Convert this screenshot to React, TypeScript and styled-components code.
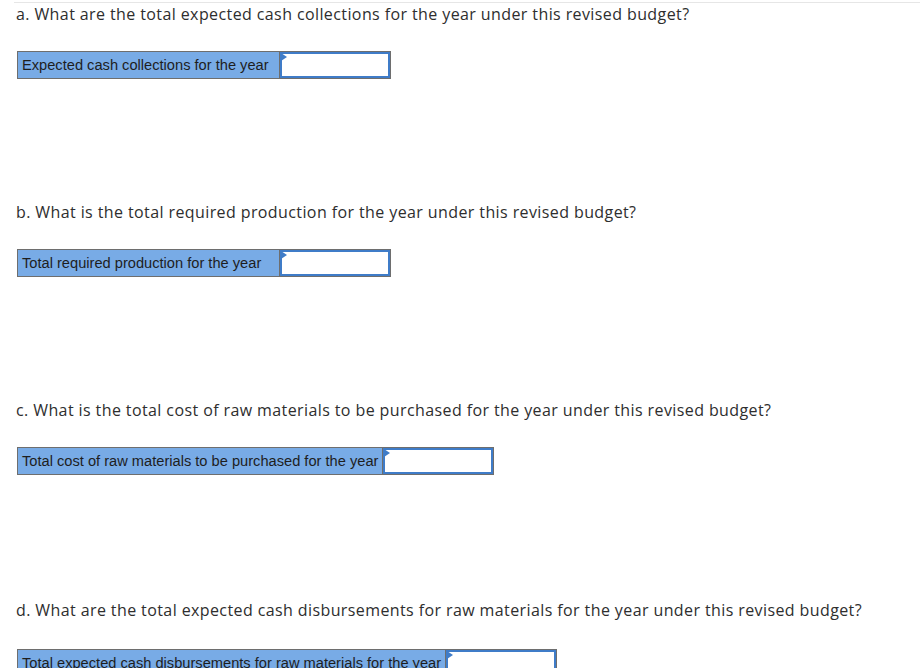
import React from "react";
import styled, { createGlobalStyle } from "styled-components";

const Global = createGlobalStyle`
  html, body { margin: 0; padding: 0; background: #ffffff; }
  body { font-family: "Open Sans", Lato, sans-serif; }
`;

const Page = styled.div`
  margin: 2px 0 0 14px;
  border-top: 1px solid #e6e6e6;
`;

const Section = styled.section<{ $lead?: number }>`
  padding-top: ${(p) => p.$lead ?? 0}px;
  padding-bottom: 122px;
`;

const Question = styled.p`
  margin: 0;
  padding-left: 2px;
  font-family: "Open Sans", Lato, sans-serif;
  font-size: 16px;
  letter-spacing: 0.4px;
  line-height: 22px;
  color: #2e2e2e;
`;

const AnswerTable = styled.table<{ $gap?: number }>`
  margin: ${(p) => p.$gap ?? 26}px 0 0 3px;
  border-collapse: collapse;
  border: 1px solid #6e6e6e;
`;

const LabelCell = styled.td`
  box-sizing: border-box;
  min-width: 262px;
  background: #78abe6;
  padding: 0 4px 0 4px;
  height: 26px;
  font-family: "Liberation Sans", Arial, sans-serif;
  font-size: 14.65px;
  color: #1e1e1e;
  white-space: nowrap;
  border-right: 1px solid #6e6e6e;
`;

const InputCell = styled.td`
  width: 110px;
  padding: 0;
  background: #ffffff;
`;

const Field = styled.div`
  box-sizing: border-box;
  width: 110px;
  height: 26px;
  border: 2px solid #3f7cc8;
  background: #fff;
  position: relative;
  &::before {
    content: "";
    position: absolute;
    left: -1px;
    top: -1px;
    width: 0;
    height: 0;
    border-top: 4px solid transparent;
    border-bottom: 4px solid transparent;
    border-left: 6px solid #3f7cc8;
  }
`;

const items = [
  {
    q: "a. What are the total expected cash collections for the year under this revised budget?",
    label: "Expected cash collections for the year",
    lead: 0,
    gap: 26,
  },
  {
    q: "b. What is the total required production for the year under this revised budget?",
    label: "Total required production for the year",
    lead: 0,
    gap: 26,
  },
  {
    q: "c. What is the total cost of raw materials to be purchased for the year under this revised budget?",
    label: "Total cost of raw materials to be purchased for the year",
    lead: 0,
    gap: 26,
  },
  {
    q: "d. What are the total expected cash disbursements for raw materials for the year under this revised budget?",
    label: "Total expected cash disbursements for raw materials for the year",
    lead: 2,
    gap: 28,
  },
];

export default function App() {
  return (
    <>
      <Global />
      <Page>
        {items.map((it) => (
          <Section key={it.q} $lead={it.lead}>
            <Question>{it.q}</Question>
            <AnswerTable $gap={it.gap}>
              <tbody>
                <tr>
                  <LabelCell>{it.label}</LabelCell>
                  <InputCell>
                    <Field />
                  </InputCell>
                </tr>
              </tbody>
            </AnswerTable>
          </Section>
        ))}
      </Page>
    </>
  );
}
